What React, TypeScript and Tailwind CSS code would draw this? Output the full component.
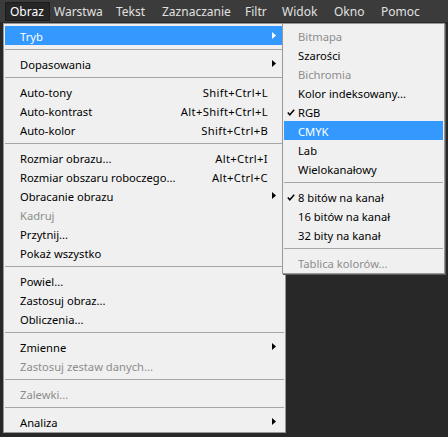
type Item =
  | { sep: true }
  | {
      sep?: false;
      label: string;
      shortcut?: string;
      arrow?: boolean;
      disabled?: boolean;
      active?: boolean;
      checked?: boolean;
    };

const mainItems: Item[] = [
  { label: 'Tryb', arrow: true, active: true },
  { sep: true },
  { label: 'Dopasowania', arrow: true },
  { sep: true },
  { label: 'Auto-tony', shortcut: 'Shift+Ctrl+L' },
  { label: 'Auto-kontrast', shortcut: 'Alt+Shift+Ctrl+L' },
  { label: 'Auto-kolor', shortcut: 'Shift+Ctrl+B' },
  { sep: true },
  { label: 'Rozmiar obrazu...', shortcut: 'Alt+Ctrl+I' },
  { label: 'Rozmiar obszaru roboczego...', shortcut: 'Alt+Ctrl+C' },
  { label: 'Obracanie obrazu', arrow: true },
  { label: 'Kadruj', disabled: true },
  { label: 'Przytnij...' },
  { label: 'Pokaż wszystko' },
  { sep: true },
  { label: 'Powiel...' },
  { label: 'Zastosuj obraz...' },
  { label: 'Obliczenia...' },
  { sep: true },
  { label: 'Zmienne', arrow: true },
  { label: 'Zastosuj zestaw danych...', disabled: true },
  { sep: true },
  { label: 'Zalewki...', disabled: true },
  { sep: true },
  { label: 'Analiza', arrow: true },
];

const modeItems: Item[] = [
  { label: 'Bitmapa', disabled: true },
  { label: 'Szarości' },
  { label: 'Bichromia', disabled: true },
  { label: 'Kolor indeksowany...' },
  { label: 'RGB', checked: true },
  { label: 'CMYK', active: true },
  { label: 'Lab' },
  { label: 'Wielokanałowy' },
  { sep: true },
  { label: '8 bitów na kanał', checked: true },
  { label: '16 bitów na kanał' },
  { label: '32 bity na kanał' },
  { sep: true },
  { label: 'Tablica kolorów...', disabled: true },
];

function Arrow({ white }: { white?: boolean }) {
  return (
    <svg width="4" height="7" viewBox="0 0 4 7" className="shrink-0">
      <path d="M0 0 L4 3.5 L0 7 Z" fill={white ? '#ffffff' : '#000000'} />
    </svg>
  );
}

function Check() {
  return (
    <svg width="8" height="7" viewBox="0 0 8 7">
      <path d="M0.8 3.6 L2.8 5.8 L7.2 0.8" fill="none" stroke="#000" strokeWidth="1.5" />
    </svg>
  );
}

function MenuRows({ items, textPad }: { items: Item[]; textPad: string }) {
  return (
    <>
      {items.map((item, i) => {
        if (item.sep) {
          return (
            <div key={i} className="h-[9px] flex items-center">
              <div className="h-px w-full bg-[#a6a6a6]" />
            </div>
          );
        }
        return (
          <div
            key={i}
            className={`relative h-[19px] flex items-center pt-[2px] ${textPad} ${
              item.active ? 'bg-[#3399ff] text-white' : item.disabled ? 'text-[#8d8d8d]' : 'text-black'
            }`}
          >
            {item.checked && (
              <span className="absolute left-[3px] top-[7px] flex">
                <Check />
              </span>
            )}
            <span className="flex-1 whitespace-nowrap">{item.label}</span>
            {item.shortcut && (
              <span className="pr-[16px] whitespace-nowrap tracking-[0.35px]">{item.shortcut}</span>
            )}
            {item.arrow && (
              <span className="absolute right-[8px] top-[6px] flex">
                <Arrow white={item.active} />
              </span>
            )}
          </div>
        );
      })}
    </>
  );
}

export default function App() {
  return (
    <div
      className="relative w-[448px] h-[437px] overflow-hidden bg-[#282828] text-[11.2px] leading-none"
      style={{ fontFamily: '"Noto Sans", "Open Sans", sans-serif' }}
    >
      {/* Menu bar */}
      <div className="h-[23px] bg-[#3b3b3b] border-b border-[#2a2a2a] flex items-start pl-[5px] pt-[2px] text-[12px] text-[#e0e0e0]">
        <div className="w-[45px] mr-[4px] h-[19px] flex items-center pl-[4px] bg-[#262626] border border-[#1c1c1c] text-white">
          Obraz
        </div>
        <div className="w-[62px] h-[19px] flex items-center">Warstwa</div>
        <div className="w-[46px] h-[19px] flex items-center">Tekst</div>
        <div className="w-[83px] h-[19px] flex items-center">Zaznaczanie</div>
        <div className="w-[37px] h-[19px] flex items-center">Filtr</div>
        <div className="w-[52px] h-[19px] flex items-center">Widok</div>
        <div className="w-[47px] h-[19px] flex items-center">Okno</div>
        <div className="h-[19px] flex items-center">Pomoc</div>
      </div>

      {/* Obraz menu */}
      <div className="absolute left-[3px] top-[23px] w-[283px] bg-[#f0f0f0] border border-[#979797] px-px pt-[2px] pb-px">
        <MenuRows items={mainItems} textPad="pl-[15px]" />
      </div>

      {/* Tryb submenu */}
      <div className="absolute left-[282px] top-[23px] w-[163px] bg-[#f0f0f0] border border-[#979797] px-px pt-[2px] pb-px shadow-[1px_1px_0_#5a5a5a]">
        <MenuRows items={modeItems} textPad="pl-[14px]" />
      </div>
    </div>
  );
}
